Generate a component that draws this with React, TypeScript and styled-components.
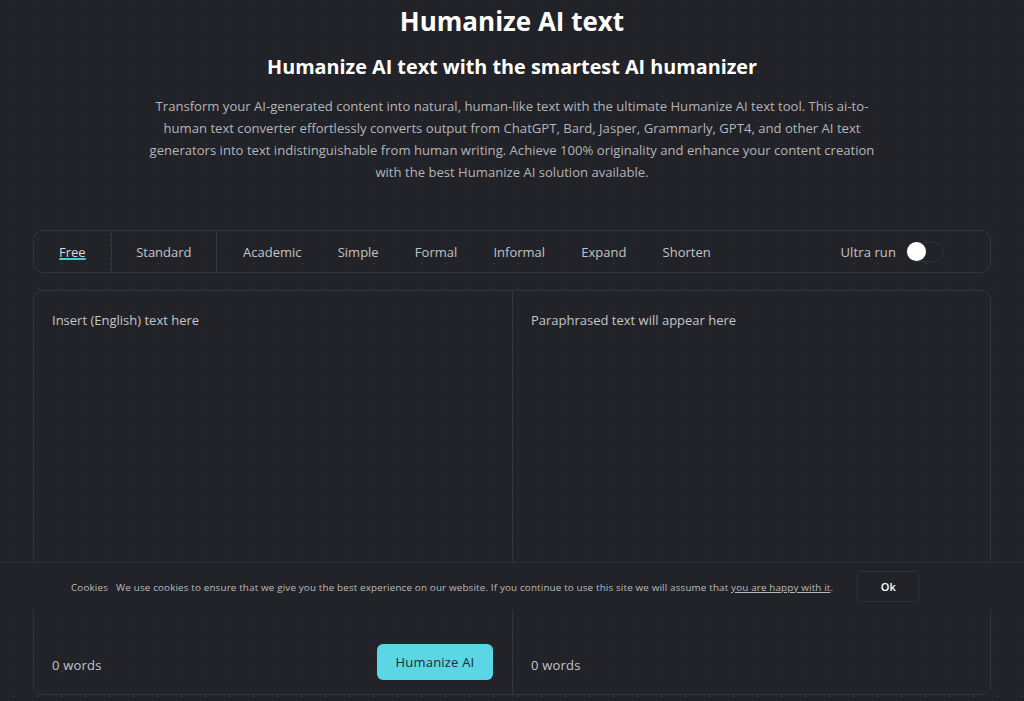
import React from "react";
import styled, { createGlobalStyle } from "styled-components";

const Global = createGlobalStyle`
  html, body { margin: 0; padding: 0; }
  body {
    background-color: #222328;
    background-image: radial-gradient(circle, #33343a 1px, transparent 1.3px);
    background-size: 24px 24px;
    background-position: 2px -12px;
    font-family: "Open Sans", "Noto Sans", sans-serif;
    color: #c8c9cc;
    height: 701px;
    overflow: hidden;
  }
`;

const Page = styled.main`
  width: 958px;
  margin: 0 auto;
  display: flex;
  flex-direction: column;
  align-items: stretch;
`;

const Title = styled.h1`
  margin: 3px 0 0;
  font-size: 26px;
  line-height: 36px;
  font-weight: 700;
  color: #ffffff;
  text-align: center;
`;

const Subtitle = styled.h2`
  margin: 14px 0 0;
  font-size: 19.8px;
  line-height: 28px;
  font-weight: 700;
  color: #ffffff;
  text-align: center;
`;

const Lead = styled.p`
  margin: 14px auto 0;
  max-width: 736px;
  font-size: 13.1px;
  line-height: 22px;
  color: #b4b5b8;
  text-align: center;
`;

const TabBar = styled.nav`
  margin-top: 47px;
  height: 43px;
  box-sizing: border-box;
  border: 1px solid #34353b;
  border-radius: 10px;
  display: flex;
  align-items: stretch;
`;

const Group = styled.div<{ $divider?: boolean; $pad: number }>`
  display: flex;
  align-items: stretch;
  padding: 0 ${(p) => p.$pad}px;
  border-right: ${(p) => (p.$divider ? "1px solid #34353b" : "none")};
  gap: 36.2px;
`;

const Tab = styled.button<{ $active?: boolean }>`
  all: unset;
  position: relative;
  display: flex;
  align-items: center;
  font-family: "Open Sans", sans-serif;
  font-size: 13px;
  color: ${(p) => (p.$active ? "#d9dadd" : "#c2c3c6")};
  cursor: pointer;
  &::after {
    content: "";
    display: ${(p) => (p.$active ? "block" : "none")};
    position: absolute;
    left: 0;
    right: 0;
    top: 27px;
    height: 2px;
    border-radius: 2px;
    background: #4cc7d4;
  }
`;

const Spacer = styled.div`
  flex: 1;
`;

const UltraRun = styled.label`
  display: flex;
  align-items: center;
  gap: 10px;
  margin-right: 46px;
  font-size: 13px;
  letter-spacing: 0.1px;
  color: #c2c3c6;
`;

const Toggle = styled.span`
  width: 38px;
  height: 20px;
  box-sizing: border-box;
  border: 1px solid #303137;
  border-radius: 10px;
  display: flex;
  align-items: center;
`;

const Knob = styled.span`
  width: 19px;
  height: 19px;
  border-radius: 50%;
  background: #ffffff;
`;

const Editor = styled.section`
  margin-top: 17px;
  height: 405px;
  box-sizing: border-box;
  border: 1px solid #34353b;
  border-radius: 10px;
  display: grid;
  grid-template-columns: 479px 1fr;
`;

const Panel = styled.div<{ $divider?: boolean }>`
  display: flex;
  flex-direction: column;
  padding: 19px 18px 14px 18px;
  border-right: ${(p) => (p.$divider ? "1px solid #34353b" : "none")};
`;

const Placeholder = styled.div`
  flex: 1;
  font-size: 13px;
  line-height: 20px;
  color: #c4c5c8;
`;

const Footer = styled.div`
  display: flex;
  align-items: center;
  justify-content: space-between;
  height: 37px;
`;

const Count = styled.span`
  font-size: 13px;
  letter-spacing: 0.2px;
  color: #c4c5c8;
  padding-top: 6px;
`;

const Primary = styled.button`
  all: unset;
  width: 116px;
  height: 36px;
  margin-right: 1px;
  border-radius: 6px;
  background: #5bd6e4;
  color: #1e2a30;
  font-family: "Open Sans", sans-serif;
  font-size: 13px;
  letter-spacing: 0.2px;
  display: flex;
  align-items: center;
  justify-content: center;
  cursor: pointer;
`;

const CookieBar = styled.div`
  position: fixed;
  left: 0;
  right: 0;
  top: 562px;
  height: 48px;
  box-sizing: border-box;
  background: #222328;
  border-top: 1px solid #2f3035;
  display: flex;
  align-items: center;
  padding-left: 71px;
  gap: 24px;
`;

const CookieText = styled.p`
  margin: 0;
  font-size: 9.86px;
  letter-spacing: 0.15px;
  color: #b9babd;
  a {
    color: #b9babd;
    text-decoration: underline;
  }
`;

const OkButton = styled.button`
  all: unset;
  width: 62px;
  height: 31px;
  box-sizing: border-box;
  border: 1px solid #303137;
  border-radius: 4px;
  display: flex;
  align-items: center;
  justify-content: center;
  font-family: "Open Sans", sans-serif;
  font-size: 11px;
  font-weight: 600;
  color: #ffffff;
`;

export default function App() {
  return (
    <>
      <Global />
      <Page>
        <Title>Humanize AI text</Title>
        <Subtitle>Humanize AI text with the smartest AI humanizer</Subtitle>
        <Lead>
          Transform your AI-generated content into natural, human-like text with the ultimate Humanize AI text tool. This ai-to-human text converter effortlessly converts output from ChatGPT, Bard, Jasper, Grammarly, GPT4, and other AI text generators into text indistinguishable from human writing. Achieve 100% originality and enhance your content creation with the best Humanize AI solution available.
        </Lead>
        <TabBar>
          <Group $divider $pad={25}>
            <Tab $active>Free</Tab>
          </Group>
          <Group $divider $pad={24.5}>
            <Tab>Standard</Tab>
          </Group>
          <Group $pad={26}>
            <Tab>Academic</Tab>
            <Tab>Simple</Tab>
            <Tab>Formal</Tab>
            <Tab>Informal</Tab>
            <Tab>Expand</Tab>
            <Tab>Shorten</Tab>
          </Group>
          <Spacer />
          <UltraRun>
            Ultra run
            <Toggle>
              <Knob />
            </Toggle>
          </UltraRun>
        </TabBar>
        <Editor>
          <Panel $divider>
            <Placeholder>Insert (English) text here</Placeholder>
            <Footer>
              <Count>0 words</Count>
              <Primary>Humanize AI</Primary>
            </Footer>
          </Panel>
          <Panel>
            <Placeholder>Paraphrased text will appear here</Placeholder>
            <Footer>
              <Count>0 words</Count>
            </Footer>
          </Panel>
        </Editor>
      </Page>
      <CookieBar>
        <CookieText>
          Cookies&nbsp;&nbsp; We use cookies to ensure that we give you the best experience on our website. If you continue to use this site we will assume that <a>you are happy with it</a>.
        </CookieText>
        <OkButton>Ok</OkButton>
      </CookieBar>
    </>
  );
}
